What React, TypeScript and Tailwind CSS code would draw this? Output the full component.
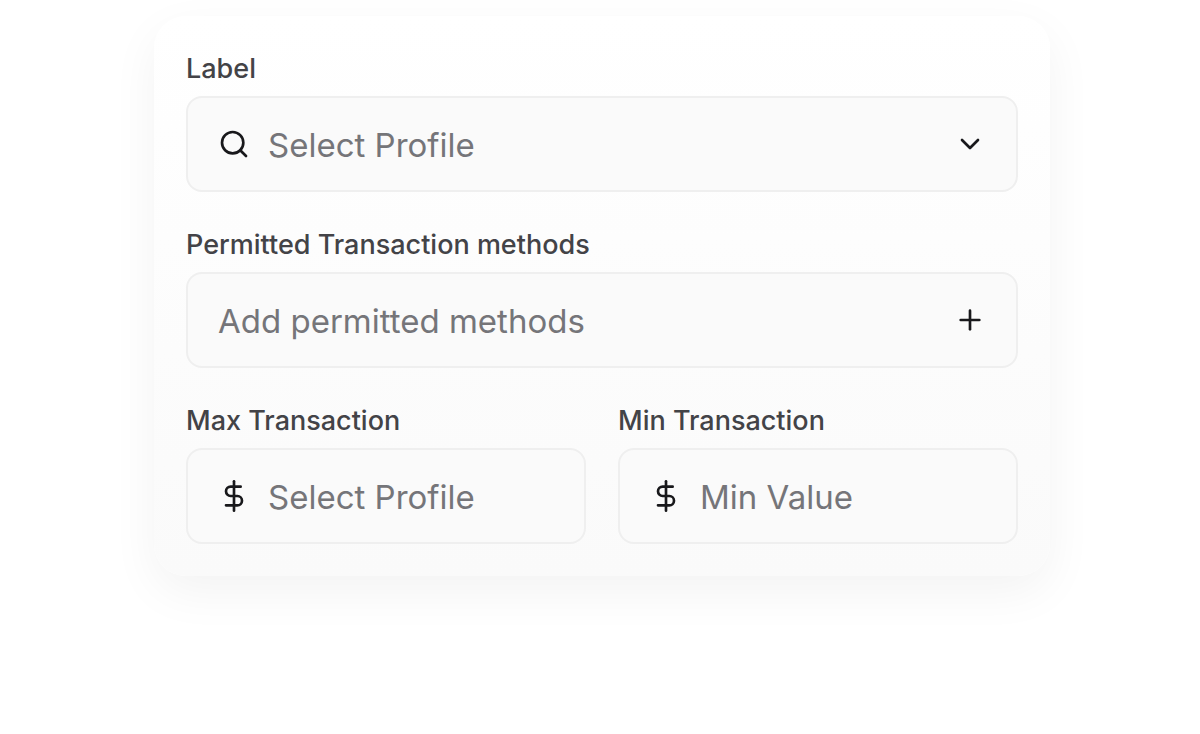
import React from 'react';
import { ChevronDown, Plus, Search } from 'lucide-react';

interface FieldProps {
  id: string;
  label: string;
  children: React.ReactNode;
}

const Field: React.FC<FieldProps> = ({ id, label, children }) => (
  <div className="flex min-w-0 flex-col gap-2">
    <label htmlFor={id} className="pt-0.5 text-[27px] leading-[38px] font-medium text-[#434347]">
      {label}
    </label>
    <div className="flex h-24 items-center gap-[18px] rounded-2xl border-2 border-[#efefef] bg-[#fafafa] px-[30px] text-[#18181b] focus-within:border-zinc-300">
      {children}
    </div>
  </div>
);

const DollarIcon: React.FC = () => (
  <svg
    viewBox="0 0 24 24"
    fill="none"
    stroke="currentColor"
    strokeWidth="2"
    strokeLinecap="round"
    strokeLinejoin="round"
    className="size-8 shrink-0"
    aria-hidden="true"
  >
    <line x1="12" y1="1" x2="12" y2="23" />
    <path d="M17 5H9.5a3.5 3.5 0 0 0 0 7h5a3.5 3.5 0 0 1 0 7H6" />
  </svg>
);

const inputClass =
  'min-w-0 flex-1 bg-transparent pt-0.5 text-[33px] leading-10 text-[#18181b] outline-none placeholder:text-[#757579]';

const App: React.FC = () => {
  return (
    <main className="min-h-screen bg-white pt-4 pl-1 font-['Inter',sans-serif]">
      <form className="mx-auto flex w-full max-w-4xl flex-col gap-8 rounded-[32px] bg-linear-to-b from-white to-[#fafafa] p-8 shadow-[0_16px_48px_rgba(0,0,0,0.05)]">
        <Field id="profile" label="Label">
          <Search className="size-8 shrink-0" />
          <select
            id="profile"
            defaultValue=""
            className="min-w-0 flex-1 appearance-none bg-transparent pt-0.5 text-[33px] leading-10 text-[#757579] outline-none"
          >
            <option value="">Select Profile</option>
          </select>
          <ChevronDown className="pointer-events-none size-8 shrink-0" />
        </Field>

        <Field id="methods" label="Permitted Transaction methods">
          <input id="methods" type="text" placeholder="Add permitted methods" className={inputClass} />
          <button type="button" aria-label="Add method" className="shrink-0 cursor-pointer">
            <Plus className="size-8" />
          </button>
        </Field>

        <div className="grid grid-cols-2 gap-8">
          <Field id="max" label="Max Transaction">
            <DollarIcon />
            <input id="max" type="text" inputMode="decimal" placeholder="Select Profile" className={inputClass} />
          </Field>
          <Field id="min" label="Min Transaction">
            <DollarIcon />
            <input id="min" type="text" inputMode="decimal" placeholder="Min Value" className={inputClass} />
          </Field>
        </div>
      </form>
    </main>
  );
};

export default App;
